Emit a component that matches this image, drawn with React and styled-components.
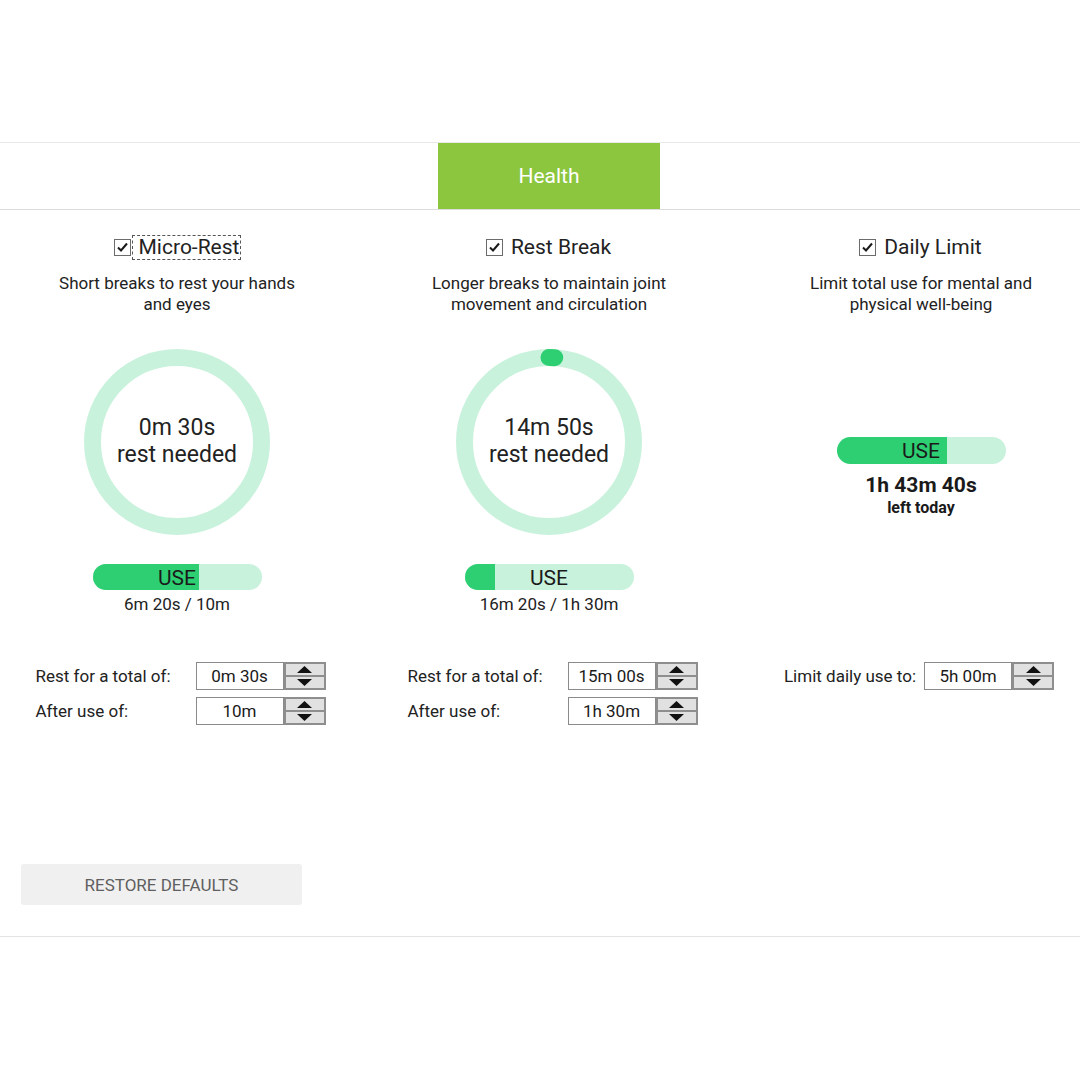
import React from "react";
import styled, { createGlobalStyle } from "styled-components";

const GlobalStyle = createGlobalStyle`
  html, body {
    margin: 0;
    padding: 0;
    background: #fff;
    overflow: hidden;
  }
  body {
    font-family: Roboto, "Liberation Sans", Arial, sans-serif;
    color: #222;
  }
`;

const Page = styled.div`
  width: 1080px;
  height: 1080px;
  padding-top: 142px;
  box-sizing: border-box;
  overflow: hidden;
`;

const TabBar = styled.div`
  border-top: 1px solid #e9e9e9;
  border-bottom: 1px solid #dcdcdc;
  display: flex;
  justify-content: center;
  width: 1116px;
  margin-left: -9px;
`;

const Tab = styled.div`
  width: 222px;
  height: 66px;
  background: #8cc63f;
  color: #fff;
  font-size: 21px;
  font-weight: 400;
  display: flex;
  align-items: center;
  justify-content: center;
`;

const Columns = styled.div`
  display: grid;
  grid-template-columns: repeat(3, 372px);
  width: 1116px;
  margin-left: -9px;
`;

const Column = styled.div`
  display: flex;
  flex-direction: column;
  align-items: center;
  padding-top: 25px;
`;

const Header = styled.div`
  display: flex;
  align-items: center;
  height: 24px;
`;

const Box = styled.span`
  width: 15px;
  height: 15px;
  border: 1px solid #6b6b6b;
  background: #fff;
  display: flex;
  align-items: center;
  justify-content: center;
  box-sizing: content-box;
`;

const Label = styled.span`
  font-size: 21px;
  line-height: 23px;
  color: #222;
  margin-left: 2px;
  padding: 0 1px 0 6px;
  outline: ${(p) => (p.$focused ? "1px dashed #555" : "none")};
  outline-offset: 0;
`;

const Description = styled.p`
  margin: 14px 0 0;
  font-size: 17px;
  line-height: 21px;
  text-align: center;
  color: #222;
  max-width: 260px;
`;

const Visual = styled.div`
  margin-top: 34px;
  height: 265px;
  display: flex;
  flex-direction: column;
  align-items: center;
  padding-top: ${(p) => p.$offset || 0}px;
  box-sizing: border-box;
`;

const RingWrap = styled.div`
  position: relative;
  width: 186px;
  height: 186px;
`;

const RingText = styled.div`
  position: absolute;
  inset: 0;
  display: flex;
  flex-direction: column;
  align-items: center;
  justify-content: center;
  font-size: 23px;
  line-height: 27px;
  color: #222;
  padding-bottom: 2px;
`;

const UseBar = styled.div`
  position: relative;
  width: 169px;
  height: 27px;
  border-radius: 14px;
  background: #c8f2dc;
  overflow: hidden;
  margin-top: ${(p) => p.$gap}px;
`;

const UseFill = styled.div`
  position: absolute;
  left: 0;
  top: 0;
  bottom: 0;
  background: #2ecf73;
`;

const UseLabel = styled.span`
  position: relative;
  display: block;
  text-align: center;
  font-size: 21px;
  line-height: 28px;
  color: #1a1a1a;
`;

const SubText = styled.div`
  margin-top: 5px;
  font-size: 17px;
  line-height: 19px;
  color: #222;
`;

const LeftBig = styled.div`
  margin-top: 9px;
  font-size: 21px;
  font-weight: 700;
  line-height: 24px;
  color: #1a1a1a;
`;

const LeftSmall = styled.div`
  margin-top: 1px;
  font-size: 16px;
  font-weight: 700;
  line-height: 20px;
  color: #1a1a1a;
`;

const Settings = styled.div`
  margin-top: 48px;
  display: grid;
  grid-template-columns: ${(p) => p.$labelWidth} 88px 42px;
  row-gap: 7px;
  align-items: center;
  margin-left: ${(p) => p.$shift || 0}px;
`;

const SettingLabel = styled.span`
  font-size: 17px;
  color: #222;
  padding-right: 8px;
`;

const Field = styled.div`
  height: 28px;
  box-sizing: border-box;
  border: 1px solid #8a8a8a;
  background: #fff;
  font-size: 17px;
  display: flex;
  align-items: center;
  justify-content: center;
  color: #1a1a1a;
`;

const Spinner = styled.div`
  height: 28px;
  box-sizing: border-box;
  border: 2px solid #8e8e8e;
  display: flex;
  flex-direction: column;
  background: #e1e1e1;
`;

const SpinHalf = styled.div`
  flex: 1;
  display: flex;
  align-items: center;
  justify-content: center;
  border-top: ${(p) => (p.$lower ? "2px solid #8e8e8e" : "none")};
`;

const Footer = styled.div`
  margin-top: 139px;
  padding: 0 0 31px 21px;
  border-bottom: 1px solid #e3e3e3;
`;

const RestoreButton = styled.button`
  width: 281px;
  height: 41px;
  border: none;
  border-radius: 3px;
  background: #f0f0f0;
  color: #5f5f5f;
  font-family: Roboto, "Liberation Sans", Arial, sans-serif;
  font-size: 17px;
  text-transform: uppercase;
  cursor: pointer;
`;

function Check({ label, focused }) {
  return (
    <Header>
      <Box>
        <svg width="13" height="13" viewBox="0 0 13 13">
          <path d="M2 6.5 L5 9.5 L11 2.5" fill="none" stroke="#1a1a1a" strokeWidth="2" />
        </svg>
      </Box>
      <Label $focused={focused}>{label}</Label>
    </Header>
  );
}

function Ring({ progress, time }) {
  const r = 84.5;
  const c = 2 * Math.PI * r;
  return (
    <RingWrap>
      <svg width="186" height="186" viewBox="0 0 186 186">
        <circle cx="93" cy="93" r={r} fill="none" stroke="#c8f2dc" strokeWidth="17" />
        {progress > 0 && (
          <circle
            cx="93"
            cy="93"
            r={r}
            fill="none"
            stroke="#2ecf73"
            strokeWidth="17"
            strokeLinecap="round"
            strokeDasharray={`${c * progress} ${c}`}
            transform="rotate(-90 93 93)"
          />
        )}
      </svg>
      <RingText>
        <span>{time}</span>
        <span>rest needed</span>
      </RingText>
    </RingWrap>
  );
}

function Use({ ratio, gap }) {
  return (
    <UseBar $gap={gap}>
      <UseFill style={{ width: `${ratio * 100}%` }} />
      <UseLabel>USE</UseLabel>
    </UseBar>
  );
}

function Arrow({ down }) {
  return (
    <svg width="15" height="7" viewBox="0 0 15 7">
      <path d={down ? "M0 0 L15 0 L7.5 7 Z" : "M7.5 0 L15 7 L0 7 Z"} fill="#111" />
    </svg>
  );
}

function SettingRow({ label, value }) {
  return (
    <>
      <SettingLabel>{label}</SettingLabel>
      <Field>{value}</Field>
      <Spinner>
        <SpinHalf>
          <Arrow />
        </SpinHalf>
        <SpinHalf $lower>
          <Arrow down />
        </SpinHalf>
      </Spinner>
    </>
  );
}

export default function App() {
  return (
    <Page>
      <GlobalStyle />
      <TabBar>
        <Tab>Health</Tab>
      </TabBar>
      <Columns>
        <Column>
          <Check label="Micro-Rest" focused />
          <Description>Short breaks to rest your hands and eyes</Description>
          <Visual>
            <Ring progress={0} time="0m 30s" />
            <Use ratio={0.633} gap={29} />
            <SubText>6m 20s / 10m</SubText>
          </Visual>
          <Settings $labelWidth="160px" $shift={7}>
            <SettingRow label="Rest for a total of:" value="0m 30s" />
            <SettingRow label="After use of:" value="10m" />
          </Settings>
        </Column>
        <Column>
          <Check label="Rest Break" />
          <Description>Longer breaks to maintain joint movement and circulation</Description>
          <Visual>
            <Ring progress={0.011} time="14m 50s" />
            <Use ratio={0.18} gap={29} />
            <SubText>16m 20s / 1h 30m</SubText>
          </Visual>
          <Settings $labelWidth="160px" $shift={7}>
            <SettingRow label="Rest for a total of:" value="15m 00s" />
            <SettingRow label="After use of:" value="1h 30m" />
          </Settings>
        </Column>
        <Column>
          <Check label="Daily Limit" />
          <Description>Limit total use for mental and physical well-being</Description>
          <Visual $offset={88}>
            <Use ratio={0.655} gap={0} />
            <LeftBig>1h 43m 40s</LeftBig>
            <LeftSmall>left today</LeftSmall>
          </Visual>
          <Settings $labelWidth="auto" $shift={-4}>
            <SettingRow label="Limit daily use to:" value="5h 00m" />
          </Settings>
        </Column>
      </Columns>
      <Footer>
        <RestoreButton>Restore defaults</RestoreButton>
      </Footer>
    </Page>
  );
}
